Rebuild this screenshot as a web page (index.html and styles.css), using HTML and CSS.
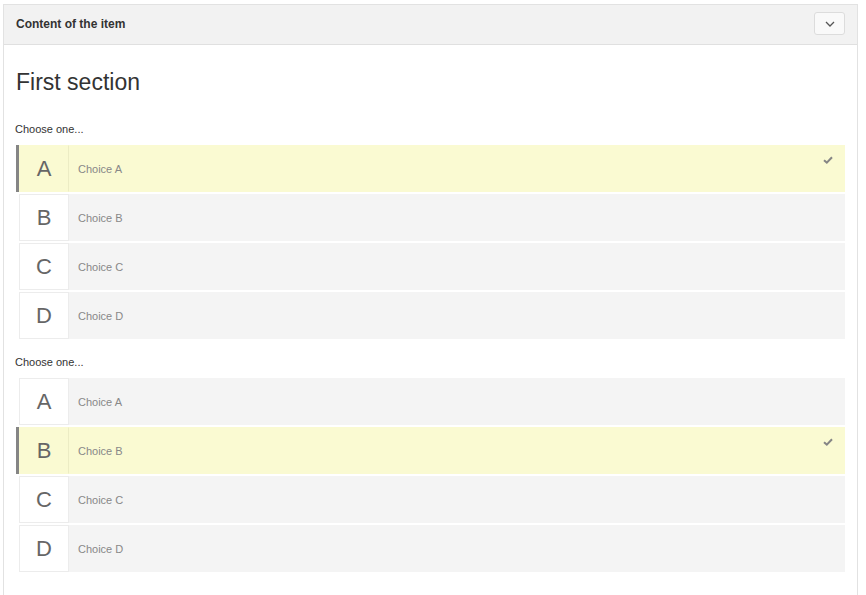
FILE: index.html
```html
<!DOCTYPE html>
<html>
<head>
<meta charset="utf-8">
<link rel="stylesheet" href="styles.css">
</head>
<body>
<div class="page">
  <div class="panel">
    <div class="panel-header">
      <span class="panel-title">Content of the item</span>
      <button class="toggle" type="button" aria-label="Collapse">
        <svg width="10" height="6" viewBox="0 0 10 6"><polyline points="1,1 5,5 9,1" fill="none" stroke="#555" stroke-width="1.3"/></svg>
      </button>
    </div>
    <div class="panel-body">
      <h2 class="section-title">First section</h2>

      <div class="question">
        <div class="prompt">Choose one...</div>
        <div class="choices">
          <div class="choice selected">
            <div class="letter">A</div>
            <div class="label">Choice A</div>
            <svg class="check" width="10" height="8" viewBox="0 0 10 8"><polyline points="1,4.2 3.8,6.6 9,1.2" fill="none" stroke="#858585" stroke-width="2"/></svg>
          </div>
          <div class="choice">
            <div class="letter">B</div>
            <div class="label">Choice B</div>
          </div>
          <div class="choice">
            <div class="letter">C</div>
            <div class="label">Choice C</div>
          </div>
          <div class="choice">
            <div class="letter">D</div>
            <div class="label">Choice D</div>
          </div>
        </div>
      </div>

      <div class="question">
        <div class="prompt">Choose one...</div>
        <div class="choices">
          <div class="choice">
            <div class="letter">A</div>
            <div class="label">Choice A</div>
          </div>
          <div class="choice selected">
            <div class="letter">B</div>
            <div class="label">Choice B</div>
            <svg class="check" width="10" height="8" viewBox="0 0 10 8"><polyline points="1,4.2 3.8,6.6 9,1.2" fill="none" stroke="#858585" stroke-width="2"/></svg>
          </div>
          <div class="choice">
            <div class="letter">C</div>
            <div class="label">Choice C</div>
          </div>
          <div class="choice">
            <div class="letter">D</div>
            <div class="label">Choice D</div>
          </div>
        </div>
      </div>
    </div>
  </div>
</div>
</body>
</html>
```

FILE: styles.css
```css
html, body {
  margin: 0;
  padding: 0;
  background: #fff;
}

body {
  font-family: "Liberation Sans", Arial, sans-serif;
  color: #333;
}

.page {
  padding: 4px 8px 0 3px;
}

.panel {
  border: 1px solid #e2e2e2;
  border-bottom: none;
  min-height: 600px;
  background: #fff;
}

.panel-header {
  box-sizing: border-box;
  display: flex;
  align-items: center;
  justify-content: space-between;
  height: 40px;
  padding: 0 12px 2px 12px;
  background: #f2f2f2;
  border-bottom: 1px solid #e0e0e0;
}

.panel-title {
  font-size: 12px;
  font-weight: bold;
  color: #333;
}

.toggle {
  display: flex;
  align-items: center;
  justify-content: center;
  width: 31px;
  height: 23px;
  padding: 0;
  margin: 0;
  background: #f9f9f9;
  border: 1px solid #dcdcdc;
  border-radius: 3px;
}

.panel-body {
  padding: 23px 12px 0 12px;
}

.section-title {
  margin: 0 0 25px 0;
  font-size: 23px;
  line-height: 28px;
  font-weight: normal;
  color: #333;
}

.question + .question {
  margin-top: 15px;
}

.prompt {
  font-size: 11px;
  line-height: 16px;
  color: #333;
  margin: 0 0 8px -1px;
}

.choices {
  display: flex;
  flex-direction: column;
  gap: 2px;
}

.choice {
  position: relative;
  display: flex;
  align-items: stretch;
  height: 47px;
  background: #f4f4f4;
  background-clip: padding-box;
  border-left: 3px solid transparent;
}

.choice .letter {
  box-sizing: border-box;
  width: 50px;
  display: flex;
  align-items: center;
  justify-content: center;
  background: #fff;
  border: 1px solid #ececec;
  font-size: 22px;
  color: #666;
}

.choice .label {
  display: flex;
  align-items: center;
  padding-left: 9px;
  font-size: 11px;
  color: #888;
}

.choice.selected {
  background: #fafad2;
  border-left-color: #858585;
}

.choice.selected .letter {
  background: #fafad2;
  border-color: #fafad2;
  border-right-color: #ececc4;
}

.check {
  position: absolute;
  top: 11px;
  right: 12px;
}
```
